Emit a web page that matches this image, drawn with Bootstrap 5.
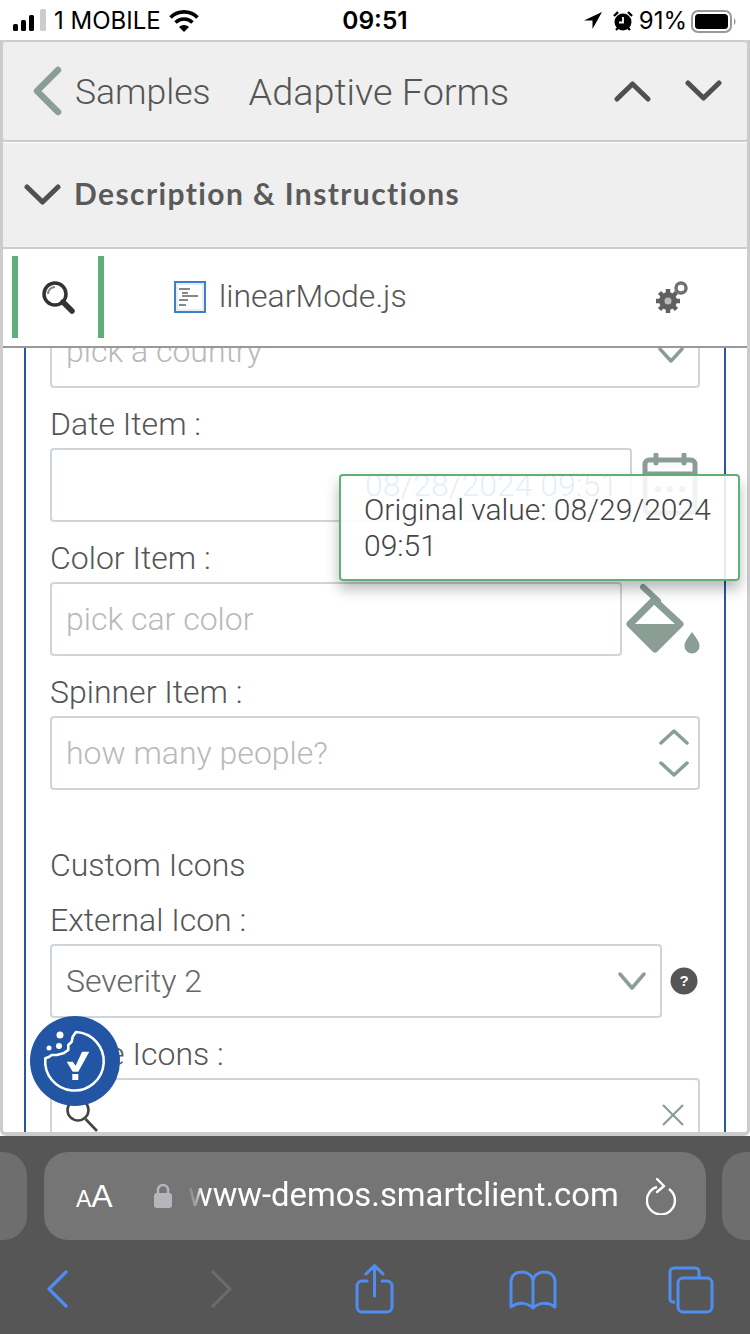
<!DOCTYPE html>
<html lang="en">
<head>
<meta charset="utf-8">
<title>Adaptive Forms</title>
<link href="https://cdn.jsdelivr.net/npm/bootstrap@5.3.0/dist/css/bootstrap.min.css" rel="stylesheet">
<style>
html,body{margin:0;height:1334px;width:750px;overflow:hidden}
body{font-family:Roboto,"Liberation Sans",sans-serif;font-weight:300;color:#444;background:#fff;position:relative}
.shell{width:750px;height:1334px}
.status-strip{height:40px;flex:none;font-family:Inter,"Liberation Sans",sans-serif;font-weight:400;font-size:24px;color:#000;padding:1px 13px 0}
.status-time{font-weight:600;font-size:24.500px}
.st-alarm{margin-left:9px}
.app-frame{height:1096px;flex:none;border:solid #ccc;border-width:0 3px 4px;border-radius:0 0 6px 6px;overflow:hidden;background:#fff}
.head-bar{height:102px;flex:none;background:#efefef;border:solid #ccc;border-width:2px 3px;border-radius:5px;margin:0 -3px;padding:0 25px 0 29px;color:#555}
.head-back{font-size:35.500px;margin-left:13px;margin-top:4px}
.head-title{font-size:37.800px;margin-left:38px;margin-top:2px}
.head-arrows{gap:34px}
.desc-bar{height:106px;flex:none;background:#efefef;border-bottom:2px solid #ccc;margin-top:1px;padding:0 0 0 21px;font-family:Lato,"Open Sans",sans-serif;font-weight:700;font-size:30px;color:#5a5a5a;letter-spacing:1.400px}
.desc-title{margin-left:13px;margin-top:-4px}
.tool-bar{height:99px;flex:none;background:#fff;border-bottom:2px solid #999;position:relative;z-index:2;font-size:32px;color:#555;padding-bottom:2px}
.green-tab{width:92px;height:82px;margin-left:9px;border:solid #5cb078;border-width:0 6px}
.file-name{margin-left:70px}
.file-label{margin-left:13px;margin-top:-2px}
.gear-mark{margin-right:58px}
.form-view{flex:1 1 auto;overflow:hidden;min-height:0}
.form-panel{margin:-34px 21px 0;border:solid #2a56a0;border-width:0 2px;padding:0 24px;height:900px;font-size:32px}
.field-label{height:60px;line-height:48px;padding-top:12px;margin:0;color:#555}
.field-box{height:74px;padding:0 14px;font-size:32px;font-weight:300;border:2px solid #ced4da;border-radius:4px;color:#666;background:#fff}
.hint-text{color:#b9b9b9}
.date-text{color:#2f69c5;margin-left:299px}
.section-name{height:94px;padding-top:55px;line-height:40px;color:#555}
.w-date{width:582px}.w-color{width:572px}.w-sel{width:612px}
.cal-mark{margin-left:10px}
.spin-mark{margin-right:-6px}
.tip-box{position:absolute;left:339px;top:474px;width:401px;height:107px;background:rgba(255,255,255,.88);border:2px solid #5cb078;border-radius:4px;box-shadow:0 8px 14px rgba(0,0,0,.28);padding:16px 23px;font-size:30px;line-height:36px;color:#444;z-index:3}
.cookie-badge{position:absolute;left:30px;top:1016px;width:90px;height:90px;z-index:4}
.safari-zone{flex:1 1 auto;background:#565656}
.url-row{height:88px;margin-top:16px;overflow:hidden}
.side-pill{width:27px;height:88px;background:#6e6e6e;flex:none}
.side-pill.l-side{border-radius:0 24px 24px 0;margin-right:17px}
.side-pill.r-side{border-radius:24px 0 0 24px;margin-left:16px;width:28px}
.url-pill{width:662px;height:88px;background:#757575;border-radius:24px;color:#fff;padding:0 28px 0 32px}
.aa-text{font-family:"Liberation Sans",sans-serif;font-weight:400;font-size:32px;width:40px;white-space:nowrap}
.aa-text small{font-size:23px}
.lock-mark{margin-left:38px}
.url-text{margin-left:16px;white-space:nowrap;font-size:32.800px;font-weight:400;flex:1;-webkit-mask-image:linear-gradient(90deg,rgba(0,0,0,.1) 0,rgba(0,0,0,.35) 8px,#000 14px);mask-image:linear-gradient(90deg,rgba(0,0,0,.1) 0,rgba(0,0,0,.35) 8px,#000 14px)}
.nav-row{height:90px;padding-top:16px}
.nav-row svg{display:block}
.nb-back{margin-left:46px;margin-top:13px}
.nb-fwd{margin-left:139px;margin-top:13px}
.nb-share{margin-left:122px;margin-top:8px}
.nb-book{margin-left:114px;margin-top:14px}
.nb-tabs{margin-left:111px;margin-top:10px}
</style>
</head>
<body>
<div class="shell d-flex flex-column">
  <div class="status-strip d-flex align-items-center position-relative">
    <svg width="33" height="24" viewBox="0 0 33 24"><rect x="0" y="15" width="5" height="7" rx="1.5"/><rect x="8" y="11" width="5" height="11" rx="1.5"/><rect x="16" y="6" width="5" height="16" rx="1.5"/><rect x="27" y="0" width="6" height="22" rx="1.5" fill="#ccc"/></svg>
    <span class="ms-2">1 MOBILE</span>
    <svg class="ms-2" width="30" height="24" viewBox="0 0 30 24" fill="none" stroke="#000" stroke-width="3.6"><path d="M1.5 8.5a19 19 0 0 1 27 0"/><path d="M6.5 13.5a12 12 0 0 1 17 0"/><path d="M15 23l-5-5a7 7 0 0 1 10 0z" fill="#000" stroke="none"/></svg>
    <span class="status-time position-absolute top-50 start-50 translate-middle">09:51</span>
    <div class="ms-auto d-flex align-items-center">
      <svg width="18" height="18" viewBox="0 0 18 18"><path d="M18 0L0 8.5h8.5V17z"/></svg>
      <svg class="st-alarm" width="24" height="24" viewBox="0 0 24 24"><circle cx="12" cy="13" r="8.5"/><path d="M12 8v5.5H8" stroke="#fff" stroke-width="1.8" fill="none"/><path d="M3 7l4-4M21 7l-4-4M5 21l2-2M19 21l-2-2" stroke="#000" stroke-width="2.4"/></svg>
      <span class="ms-1">91%</span>
      <svg class="ms-1" width="46" height="24" viewBox="0 0 46 24"><rect x="1" y="2" width="39" height="21" rx="6" fill="none" stroke="#999" stroke-width="2"/><rect x="4" y="5" width="33" height="15" rx="3.5"/><path d="M43 9c2 1 2 6 0 7z" fill="#999"/></svg>
    </div>
  </div>
  <div class="app-frame d-flex flex-column">
    <div class="head-bar d-flex align-items-center">
      <svg width="30" height="50" viewBox="0 0 30 50" fill="none" stroke="#8a9e96" stroke-width="6.5" stroke-linecap="round" stroke-linejoin="round"><path d="M26 4L5 25l21 21"/></svg>
      <span class="head-back">Samples</span>
      <span class="head-title">Adaptive Forms</span>
      <div class="ms-auto d-flex head-arrows align-items-center">
        <svg width="37" height="22" viewBox="0 0 37 22" fill="none" stroke="#505050" stroke-width="5" stroke-linecap="round" stroke-linejoin="round"><path d="M3 19L18.500 4 34 19"/></svg>
        <svg width="37" height="22" viewBox="0 0 37 22" fill="none" stroke="#505050" stroke-width="5" stroke-linecap="round" stroke-linejoin="round"><path d="M3 3l15.500 15L34 3"/></svg>
      </div>
    </div>
    <div class="desc-bar d-flex align-items-center">
      <svg width="37" height="22" viewBox="0 0 37 22" fill="none" stroke="#505050" stroke-width="5" stroke-linecap="round" stroke-linejoin="round"><path d="M3 3l15.500 15L34 3"/></svg>
      <span class="desc-title">Description &amp; Instructions</span>
    </div>
    <div class="tool-bar d-flex align-items-center">
      <div class="green-tab d-flex align-items-center justify-content-center">
        <svg width="34" height="34" viewBox="0 0 34 34" fill="none" stroke="#333"><circle cx="14" cy="14" r="11" stroke-width="3.5"/><path d="M7 14a7 7 0 0 1 7-7" stroke="#888" stroke-width="2"/><path d="M22 22l9 9" stroke-width="5.500" stroke-linecap="round"/></svg>
      </div>
      <div class="file-name d-flex align-items-center">
        <svg width="32" height="32" viewBox="0 0 32 32"><rect x="1" y="1" width="30" height="30" fill="#fff" stroke="#3f7fc8" stroke-width="2"/><rect x="3" y="3" width="26" height="26" fill="none" stroke="#c9dcf2" stroke-width="1"/><path d="M5 8h11M8 12h6M8 15h16M5 19h9M5 24h7" stroke="#888" stroke-width="2.200"/></svg>
        <span class="file-label">linearMode.js</span>
      </div>
      <svg class="ms-auto gear-mark" width="34" height="34" viewBox="0 0 34 34"><g fill="#606060"><circle cx="13" cy="21" r="9"/><path d="M13 9v24M1 21h24M4.500 12.500l17 17M21.500 12.500l-17 17" stroke="#606060" stroke-width="4.500"/></g><circle cx="13" cy="21" r="3.500" fill="#bbb"/><circle cx="26" cy="8" r="5" fill="none" stroke="#707070" stroke-width="3.500"/></svg>
    </div>
    <div class="form-view">
      <div class="form-panel">
        <div class="field-box form-control d-flex align-items-center justify-content-between">
          <span class="hint-text">pick a country</span>
          <svg class="mt-2" width="26" height="18" viewBox="0 0 26 18" fill="none" stroke="#8a9e96" stroke-width="3.500" stroke-linecap="round" stroke-linejoin="round"><path d="M2 3l11 12L24 3"/></svg>
        </div>
        <div class="field-label">Date Item :</div>
        <div class="d-flex align-items-center">
          <div class="field-box form-control w-date flex-shrink-0 d-flex align-items-center"><span class="date-text text-nowrap">08/28/2024 09:51</span></div>
          <svg class="cal-mark flex-shrink-0" width="56" height="64" viewBox="0 0 56 64"><rect x="3" y="7" width="50" height="53" rx="4" fill="none" stroke="#8a9e96" stroke-width="5"/><path d="M3 21h50" stroke="#8a9e96" stroke-width="5"/><path d="M14 2v8M42 2v8" stroke="#8a9e96" stroke-width="5" stroke-linecap="round"/><g fill="#8a9e96"><circle cx="16" cy="36" r="3"/><circle cx="28" cy="36" r="3"/><circle cx="40" cy="36" r="3"/></g></svg>
        </div>
        <div class="field-label">Color Item :</div>
        <div class="d-flex align-items-center">
          <div class="field-box form-control w-color flex-shrink-0 d-flex align-items-center"><span class="hint-text">pick car color</span></div>
          <svg class="flex-shrink-0" width="78" height="72" viewBox="0 0 78 72" fill="#8a9e96" stroke="none"><path d="M8 41L32 17 58 41 33 66z" fill="none" stroke="#8a9e96" stroke-width="7" stroke-linejoin="round"/><path d="M8 41h50L33 66z"/><path d="M21 4l15 14" stroke="#8a9e96" stroke-width="6" stroke-linecap="round"/><path d="M70 49c4 6 7.500 9 7.500 14a7.500 7.500 0 0 1-15 0c0-5 3.500-8 7.500-14z"/></svg>
        </div>
        <div class="field-label">Spinner Item :</div>
        <div class="field-box form-control d-flex align-items-center justify-content-between">
          <span class="hint-text">how many people?</span>
          <svg class="spin-mark" width="32" height="50" viewBox="0 0 32 50" fill="none" stroke="#8a9e96" stroke-width="3.500" stroke-linecap="round" stroke-linejoin="round"><path d="M3 15L16 3l13 12M3 35l13 12 13-12"/></svg>
        </div>
        <div class="section-name">Custom Icons</div>
        <div class="field-label">External Icon :</div>
        <div class="d-flex align-items-center">
          <div class="field-box form-control w-sel flex-shrink-0 d-flex align-items-center justify-content-between">
            <span>Severity 2</span>
            <svg width="28" height="20" viewBox="0 0 28 20" fill="none" stroke="#8a9e96" stroke-width="3.500" stroke-linecap="round" stroke-linejoin="round"><path d="M2 3l12 14L26 3"/></svg>
          </div>
          <svg class="ms-2 flex-shrink-0" width="28" height="28" viewBox="0 0 28 28"><circle cx="14" cy="14" r="13.500" fill="#555"/><text x="14" y="19" text-anchor="middle" font-family="Liberation Sans,sans-serif" font-weight="700" font-size="15" fill="#fff">?</text></svg>
        </div>
        <div class="field-label">Inline Icons :</div>
        <div class="field-box form-control d-flex align-items-start justify-content-between">
          <svg class="mt-3" width="34" height="40" viewBox="0 0 34 40" fill="none" stroke="#444" stroke-width="2.600"><circle cx="12" cy="14" r="10.500"/><path d="M19.500 23L31 35"/></svg>
          <svg class="mt-4" width="22" height="22" viewBox="0 0 22 22" fill="none" stroke="#8a9e96" stroke-width="2.200"><path d="M1 1l20 20M21 1L1 21"/></svg>
        </div>
      </div>
    </div>
  </div>
  <div class="safari-zone">
    <div class="url-row d-flex">
      <div class="side-pill l-side"></div>
      <div class="url-pill d-flex align-items-center flex-shrink-0">
        <span class="aa-text"><small>A</small>A</span>
        <svg class="lock-mark" width="18" height="26" viewBox="0 0 18 26"><path d="M4 11V7a5 5 0 0 1 10 0v4" fill="none" stroke="#b5b5bb" stroke-width="2.500"/><rect x="0" y="10" width="18" height="15" rx="3" fill="#b5b5bb"/></svg>
        <span class="url-text">www-demos.smartclient.com</span>
        <svg class="flex-shrink-0" width="32" height="38" viewBox="0 0 32 38" fill="none" stroke="#fff" stroke-width="2.400"><path d="M11 10a14 14 0 1 0 12 2"/><path d="M11 2l7 7-7 6" stroke-linecap="round" stroke-linejoin="round"/></svg>
      </div>
      <div class="side-pill r-side"></div>
    </div>
    <div class="nav-row d-flex align-items-start">
      <svg class="nb-back" width="24" height="40" viewBox="0 0 24 40" fill="none" stroke="#4f8df0" stroke-width="3.200" stroke-linecap="round" stroke-linejoin="round"><path d="M20 3L3 20l17 17"/></svg>
      <svg class="nb-fwd" width="24" height="40" viewBox="0 0 24 40" fill="none" stroke="#6a6a6a" stroke-width="3.200" stroke-linecap="round" stroke-linejoin="round"><path d="M4 3l17 17L4 37"/></svg>
      <svg class="nb-share" width="40" height="50" viewBox="0 0 40 50" fill="none" stroke="#4f8df0" stroke-width="3" stroke-linecap="round" stroke-linejoin="round"><path d="M12 17H7a5 5 0 0 0-5 5v21a5 5 0 0 0 5 5h25a5 5 0 0 0 5-5V22a5 5 0 0 0-5-5h-5M19.500 32V2M11 10l8.500-8.500L28 10"/></svg>
      <svg class="nb-book" width="48" height="40" viewBox="0 0 48 40" fill="none" stroke="#4f8df0" stroke-width="3" stroke-linecap="round" stroke-linejoin="round"><path d="M24 38V11C24 6 19 2 13 2 6 2 2 6 2 12V37C9 32 18 32 24 38ZM24 38V11C24 6 29 2 35 2 42 2 46 6 46 12V37C39 32 30 32 24 38Z"/></svg>
      <svg class="nb-tabs" width="48" height="48" viewBox="0 0 48 48" fill="none" stroke="#4f8df0" stroke-width="3" stroke-linejoin="round"><path d="M7 36H5a3 3 0 0 1-3-3V6a4 4 0 0 1 4-4h21a4 4 0 0 1 4 4v6"/><rect x="10" y="12" width="34" height="34" rx="5"/></svg>
    </div>
  </div>
</div>
<div class="tip-box">Original value: 08/29/2024<br>09:51</div>
<svg class="cookie-badge" viewBox="0 0 90 90"><circle cx="45" cy="45" r="45" fill="#2255a4"/><path d="M15.300 42.300A29.300 29.300 0 1 0 46 16L42.700 20.700 41.700 25.700 38.300 29 38.300 34 33.300 37.300 26.700 39 21.700 39 18.300 41.300z" fill="none" stroke="#fff" stroke-width="2.600" stroke-linejoin="round"/><circle cx="30" cy="19" r="3.500" fill="#fff"/><circle cx="29" cy="30" r="3" fill="#fff"/><circle cx="19" cy="32" r="2.500" fill="#fff"/><path d="M36.700 45.700h6l3 4 6.300-14h7.300L48.300 55.700h-5.600z" fill="#fff"/><rect x="42.300" y="58" width="6" height="6" fill="#fff"/></svg>
</body>
</html>
